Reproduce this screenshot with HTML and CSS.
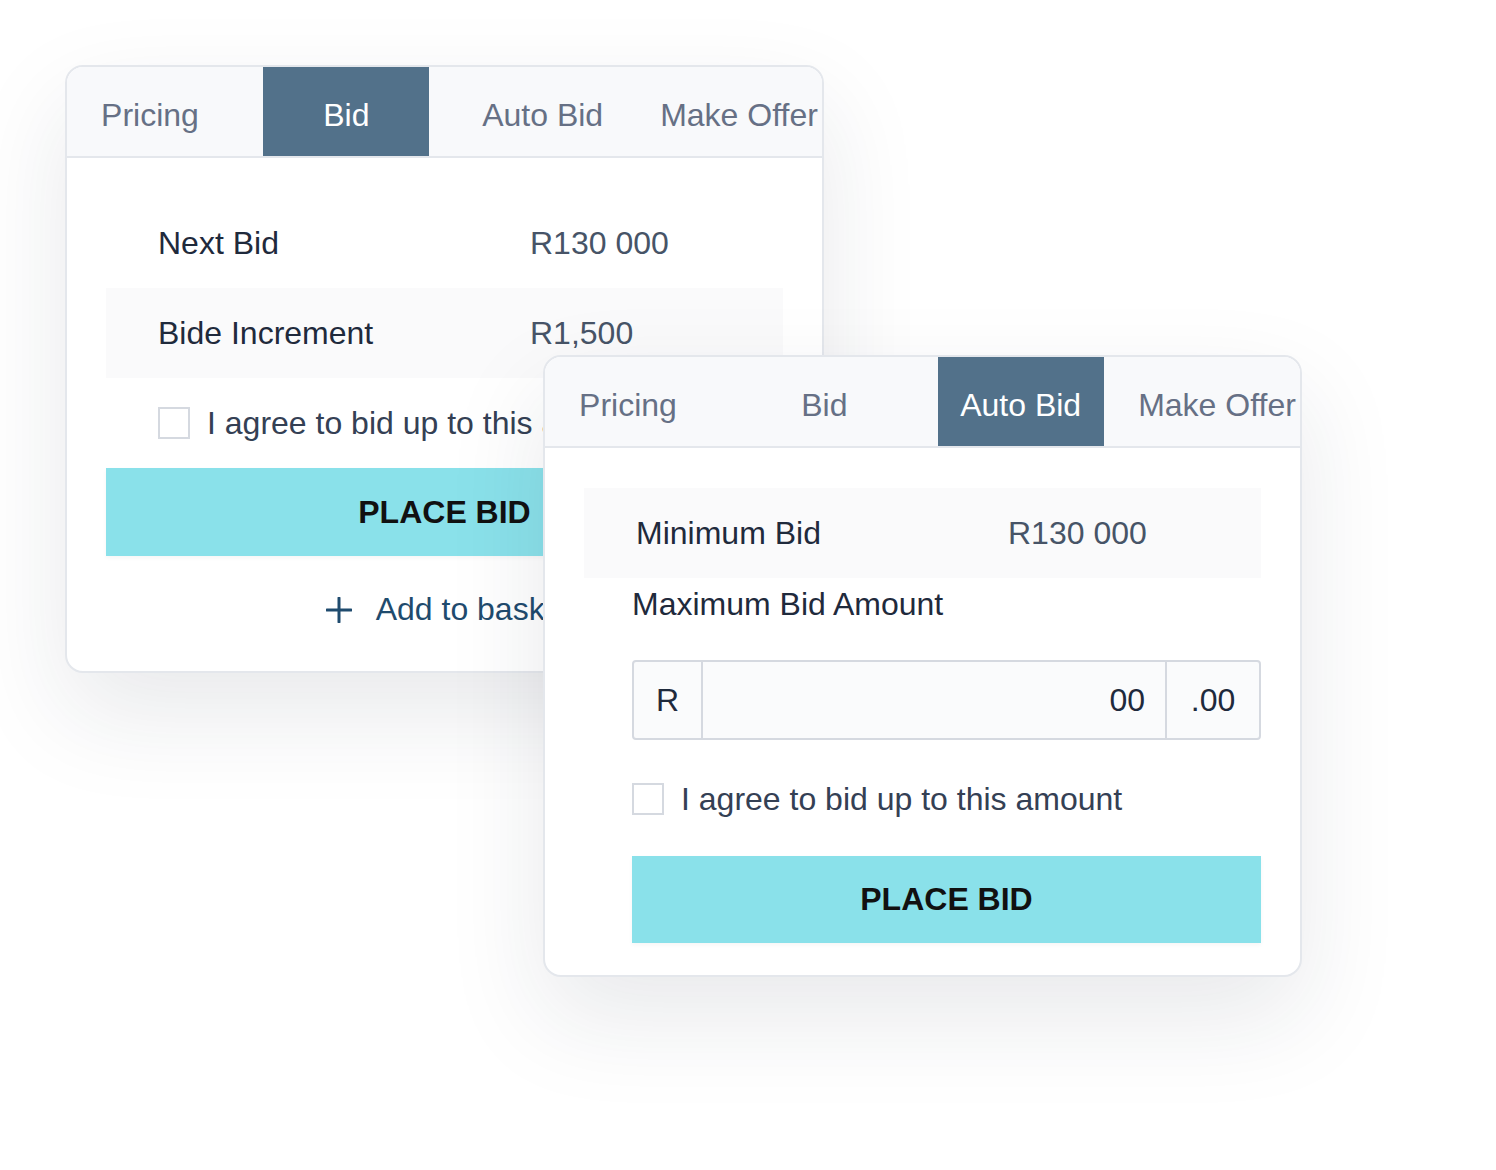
FILE: index.html
```html
<!DOCTYPE html>
<html lang="en">
<head>
    <meta charset="UTF-8">
    <meta name="viewport" content="width=device-width, initial-scale=1.0">
    <title>Place a bid</title>
    <link rel="stylesheet" href="styles.css">
</head>
<body>
    <div class="stage">

        <!-- bid card -->
        <div class="card card-bid">
            <div class="tabs">
                <div class="tab">Pricing</div>
                <div class="tab active">Bid</div>
                <div class="tab">Auto Bid</div>
                <div class="tab">Make Offer</div>
            </div>
            <div class="card-body">
                <div class="info-row">
                    <span class="info-label">Next Bid</span>
                    <span class="info-value">R130 000</span>
                </div>
                <div class="info-row shaded">
                    <span class="info-label">Bide Increment</span>
                    <span class="info-value">R1,500</span>
                </div>
                <label class="agree agree-bid">
                    <span class="checkbox"></span>
                    I agree to bid up to this amount
                </label>
                <button class="place-bid">PLACE BID</button>
                <a class="add-basket" href="#">
                    <svg width="26" height="26" viewBox="0 0 26 26">
                        <path d="M13 1v24M1 13h24" stroke="currentColor" stroke-width="3" stroke-linecap="round" fill="none"/>
                    </svg>
                    Add to basket
                </a>
            </div>
        </div>

        <!-- auto bid card -->
        <div class="card card-auto">
            <div class="tabs">
                <div class="tab">Pricing</div>
                <div class="tab">Bid</div>
                <div class="tab active">Auto Bid</div>
                <div class="tab">Make Offer</div>
            </div>
            <div class="card-body">
                <div class="info-row shaded">
                    <span class="info-label">Minimum Bid</span>
                    <span class="info-value">R130 000</span>
                </div>
                <div class="auto-form">
                    <div class="form-label">Maximum Bid Amount</div>
                    <div class="amount-group">
                        <span class="amount-prefix">R</span>
                        <span class="amount-input">00</span>
                        <span class="amount-suffix">.00</span>
                    </div>
                    <label class="agree agree-auto">
                        <span class="checkbox"></span>
                        I agree to bid up to this amount
                    </label>
                    <button class="place-bid place-bid-auto">PLACE BID</button>
                </div>
            </div>
        </div>

    </div>
</body>
</html>
```

FILE: styles.css
```css
* {
    box-sizing: border-box;
}

body {
    margin: 0;
    background: #fff;
    font-family: "Liberation Sans", Arial, sans-serif;
    font-size: 32px;
    color: #1f2a3c;
}

/* canvas with the two overlapping cards */
.stage {
    position: relative;
    width: 1496px;
    height: 1170px;
    padding: 65px 0 0 65px;
    overflow: hidden;
}

.card {
    width: 759px;
    background: #fff;
    border: 2px solid #e4e7ec;
    border-radius: 18px;
    overflow: hidden;
    box-shadow: 0 40px 100px rgba(30, 40, 60, 0.1);
}

.card-bid {
    height: 608px;
}

.card-auto {
    position: absolute;
    left: 543px;
    top: 355px;
    height: 622px;
}

/* tabs */
.tabs {
    display: flex;
    justify-content: space-between;
    height: 91px;
    background: #f8f9fb;
    border-bottom: 2px solid #e4e7ec;
}

.tab {
    width: 166px;
    display: flex;
    align-items: center;
    justify-content: center;
    color: #667085;
    white-space: nowrap;
    padding-top: 8px;
}

.tab.active {
    background: #52718a;
    color: #fff;
}

/* body */
.card-body {
    padding: 40px 39px 0 39px;
}

.info-row {
    display: grid;
    grid-template-columns: 372px 1fr;
    align-items: center;
    height: 90px;
    padding-left: 52px;
}

.info-row.shaded {
    background: #fafafb;
}

.info-value {
    color: #475467;
}

.agree {
    display: flex;
    align-items: center;
    gap: 17px;
    color: #344054;
    white-space: nowrap;
}

.checkbox {
    flex: none;
    width: 32px;
    height: 32px;
    border: 2px solid #d5d9e0;
    background: #fff;
}

.agree-bid {
    height: 90px;
    padding-left: 52px;
}

.place-bid {
    display: block;
    width: 100%;
    height: 88px;
    border: none;
    background: #8ae1ea;
    font-family: inherit;
    font-size: 32px;
    font-weight: bold;
    color: #111;
    box-shadow: 0 2px 4px rgba(0, 0, 0, 0.04);
    cursor: pointer;
}

.add-basket {
    display: flex;
    align-items: center;
    justify-content: center;
    gap: 24px;
    margin-top: 35px;
    padding-left: 8px;
    color: #1f4b6e;
    text-decoration: none;
}

/* auto bid form */
.auto-form {
    padding-left: 48px;
}

.form-label {
    margin-top: 10px;
    line-height: 32px;
}

.amount-group {
    display: flex;
    height: 80px;
    margin-top: 40px;
    border: 2px solid #d5d9e0;
    border-radius: 4px;
    background: #fafbfc;
    color: #1f2a3c;
}

.amount-prefix {
    width: 69px;
    display: flex;
    align-items: center;
    justify-content: center;
    border-right: 2px solid #d5d9e0;
}

.amount-input {
    flex: 1;
    display: flex;
    align-items: center;
    justify-content: flex-end;
    padding-right: 20px;
    border-right: 2px solid #d5d9e0;
}

.amount-suffix {
    width: 92px;
    display: flex;
    align-items: center;
    justify-content: center;
}

.agree-auto {
    height: 32px;
    margin-top: 43px;
}

.place-bid-auto {
    margin-top: 41px;
    height: 87px;
}
```
